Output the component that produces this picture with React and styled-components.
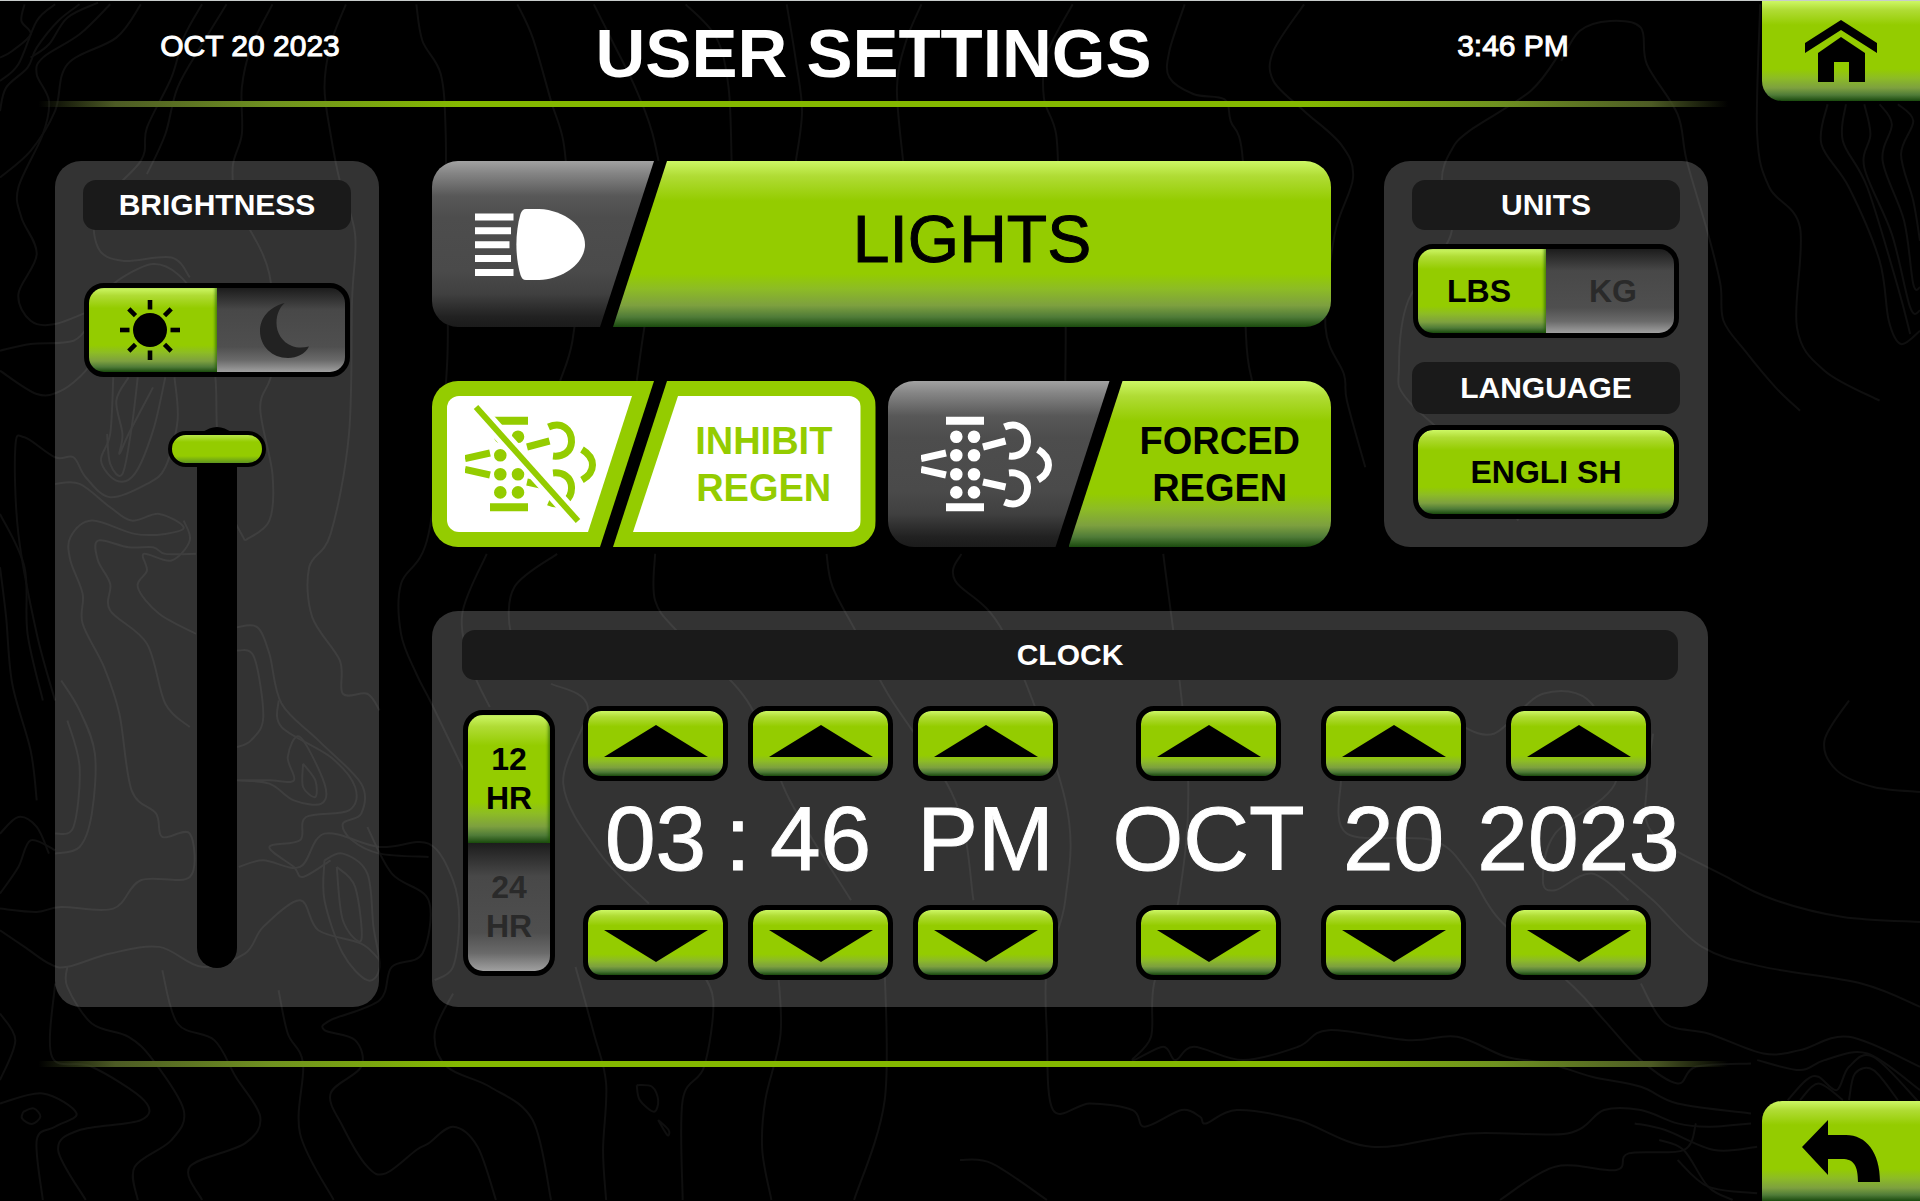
import { useState } from "react";
import styled, { createGlobalStyle, css } from "styled-components";

const green = "#94cc00";

const greenBevel = css`
    background: linear-gradient(
        #cdf765 0%,
        #b0dc35 9%,
        #94cc00 24%,
        #94cc00 68%,
        #8dbc25 77%,
        #7da03f 87%,
        #4f7b38 94%,
        #1a4a0e 100%
    );
`;

const greyBevel = css`
    background: linear-gradient(
        #a2a2a2 0%,
        #868686 7%,
        #585858 21%,
        #4d4d4d 34%,
        #4a4a4a 66%,
        #404040 80%,
        #212121 94%,
        #1b1b1b 100%
    );
`;

const sunkenBevel = css`
    background: linear-gradient(
        #1c1c1c 0%,
        #2a2a2a 8%,
        #484848 26%,
        #4f4f4f 70%,
        #6a6a6a 86%,
        #a0a0a0 100%
    );
`;

const GlobalStyle = createGlobalStyle`
    *, *::before, *::after {
        box-sizing: border-box;
    }
    body {
        margin: 0;
        background: #000;
        color: #fff;
        font-family: "Liberation Sans", Arial, Helvetica, sans-serif;
    }
    button {
        margin: 0;
        padding: 0;
        border: 0;
        font-family: inherit;
        cursor: pointer;
    }
`;

const Screen = styled.div`
    position: relative;
    display: flex;
    flex-direction: column;
    min-height: 100vh;
    min-width: 1760px;
    border-top: 1px solid #c8cccb;
    overflow: hidden;
    isolation: isolate;
`;

const Backdrop = styled.svg`
    position: absolute;
    inset: 0;
    width: 100%;
    height: 100%;
    z-index: -1;

    path {
        fill: none;
        stroke: #0f0f0f;
        stroke-width: 2;
        vector-effect: non-scaling-stroke;
    }
`;

const Header = styled.header`
    display: flex;
    height: 100px;
`;

const HeaderInfo = styled.div`
    flex: 1;
    display: grid;
    grid-template-columns: 390px 1fr 390px;
    padding: 0 54px 0 55px;
    text-align: center;
`;

const HeaderText = styled.div`
    padding-top: 28px;
    font-size: 30px;
    line-height: 34px;
    -webkit-text-stroke: 1px #fff;
`;

const Title = styled.h1`
    margin: 0;
    padding: 15px 16px 0 0;
    font-size: 69px;
    line-height: 76px;
    white-space: nowrap;
`;

const CornerButton = styled.button`
    display: flex;
    align-items: center;
    justify-content: center;
    width: 158px;
    height: 100px;
    border-radius: ${(props) => (props.$bottom ? "20px 0 0 0" : "0 0 0 20px")};
    ${greenBevel}
`;

const Divider = styled.hr`
    width: 100%;
    height: 6px;
    margin: 0;
    border: 0;
    background: linear-gradient(
        90deg,
        transparent 2%,
        #4c5a24 6%,
        #6f9120 14%,
        #84b800 24%,
        #84b800 68%,
        #6f9120 78%,
        #4c5a24 86%,
        transparent 90%
    );
`;

const Main = styled.main`
    display: grid;
    grid-template-columns: 324px 1fr 324px;
    grid-template-rows: 386px 396px;
    gap: 64px 53px;
    padding: 54px 212px 54px 55px;
`;

const Panel = styled.section`
    display: flex;
    flex-direction: column;
    align-items: center;
    padding: 19px 28px 0;
    border-radius: 26px;
    background: rgba(255, 255, 255, 0.2);
`;

const BrightnessPanel = styled(Panel)`
    grid-row: 1 / 3;
`;

const ClockPanel = styled(Panel)`
    grid-column: 2 / 4;
    padding: 19px 30px 0;
`;

const PanelTitle = styled.h2`
    width: 100%;
    margin: 0;
    border-radius: 13px;
    background: #1a1a1a;
    font-size: 30px;
    line-height: 50px;
    text-align: center;
`;

const ToggleOption = styled.label`
    flex: 1;
    display: flex;
    align-items: center;
    justify-content: center;
    font-size: 32px;
    line-height: 39px;
    font-weight: bold;
    text-align: center;
    cursor: pointer;
    color: #2a2a2a;
    ${sunkenBevel}

    &:has(input:checked) {
        color: #000;
        box-shadow: inset -3px 0 3px -1px rgba(30, 90, 0, 0.6);
        ${greenBevel}
    }

    input {
        appearance: none;
        width: 0;
        height: 0;
        margin: 0;
    }
`;

const Toggle = styled.div`
    display: flex;
    width: 266px;
    height: 94px;
    margin-top: ${(props) => props.$top}px;
    border: 5px solid #000;
    border-radius: 20px;
    background: #000;
    overflow: hidden;

    ${ToggleOption}:first-child {
        padding-right: 6px;
    }
    ${ToggleOption}:last-child {
        padding-left: 6px;
    }
`;

const HourFormat = styled.div`
    flex: none;
    display: flex;
    flex-direction: column;
    width: 92px;
    height: 266px;
    margin: 4px 28px 0 1px;
    border: 5px solid #000;
    border-radius: 20px;
    background: #000;
    overflow: hidden;
`;

const Slider = styled.input`
    appearance: none;
    writing-mode: vertical-lr;
    direction: rtl;
    width: 98px;
    height: 541px;
    margin: 50px 0 0;
    background: transparent;
    cursor: pointer;

    &::-webkit-slider-runnable-track {
        width: 40px;
        height: 541px;
        padding: 4px 0;
        border-radius: 20px;
        background: #000;
    }

    &::-webkit-slider-thumb {
        appearance: none;
        width: 98px;
        height: 36px;
        margin-left: -29px;
        border: 4px solid #000;
        border-radius: 18px;
        background: linear-gradient(#b8e64a, #94cc00 25%, #94cc00 75%, #5f9420);
    }
`;

const Actions = styled.div`
    display: flex;
    flex-direction: column;
    justify-content: space-between;
`;

const ActionRow = styled.div`
    display: flex;
    gap: 12px;
`;

const ActionButton = styled.button`
    flex: 1;
    display: flex;
    height: 166px;
    border-radius: 26px;
    background: #000;
    overflow: hidden;
    color: ${(props) => (props.$outlined ? green : "#000")};
`;

const ActionIcon = styled.span`
    flex: none;
    display: flex;
    align-items: center;
    width: 222px;
    padding-left: ${(props) => props.$indent}px;
    color: #fff;
    clip-path: polygon(0 0, 100% 0, 168px 100%, 0 100%);
    ${greyBevel}
`;

const ActionLabel = styled.span`
    flex: 1;
    display: flex;
    align-items: center;
    justify-content: center;
    margin-left: -41px;
    clip-path: polygon(54px 0, 100% 0, 100% 100%, 0 100%);
    font-size: ${(props) => (props.$large ? 66 : 38)}px;
    font-weight: ${(props) => (props.$large ? "normal" : "bold")};
    line-height: 47px;
    padding: ${(props) => (props.$large ? "0 0 10px" : "2px 0 0 40px")};
    ${(props) => props.$large && "-webkit-text-stroke: 1px #000;"}
    ${greenBevel}
`;

// Outlined buttons: solid green frame with a white face in each half
const FramedIcon = styled(ActionIcon)`
    padding: 15px 22px 15px 15px;
    color: ${green};
    background: ${green};
`;

const FramedLabel = styled(ActionLabel)`
    padding: 15px 15px 15px 20px;
    background: ${green};
`;

const IconFace = styled.span`
    flex: 1;
    display: flex;
    align-items: center;
    height: 100%;
    padding-left: 18px;
    border-radius: 12px 0 0 12px;
    background: #fff;
    clip-path: polygon(0 0, 100% 0, calc(100% - 44px) 100%, 0 100%);
`;

const LabelFace = styled.span`
    flex: 1;
    display: flex;
    align-items: center;
    justify-content: center;
    height: 100%;
    padding: 2px 0 0 34px;
    border-radius: 0 12px 12px 0;
    background: #fff;
    clip-path: polygon(45px 0, 100% 0, 100% 100%, 0 100%);
`;

const LanguageButton = styled.button`
    width: 266px;
    height: 94px;
    margin-top: 11px;
    && {
        border: 5px solid #000;
    }
    border-radius: 20px;
    color: #000;
    font-size: 32px;
    font-weight: bold;
    ${greenBevel}
    background-clip: padding-box;
`;

const LanguageTitle = styled(PanelTitle)`
    margin-top: 24px;
    line-height: 52px;
`;

const ClockBody = styled.div`
    display: flex;
    align-items: flex-start;
    width: 100%;
    padding: 26px 27px 0 0;
`;

const Fields = styled.div`
    flex: 1;
    display: flex;
    justify-content: space-between;
`;

const FieldGroup = styled.div`
    display: flex;
    gap: ${(props) => props.$gap}px;
`;

const Field = styled.div`
    display: flex;
    flex-direction: column;
    align-items: center;
    width: 145px;
`;

const StepButton = styled.button`
    display: flex;
    align-items: center;
    justify-content: center;
    width: 145px;
    height: 75px;
    && {
        border: 5px solid #000;
        padding: ${(props) => (props.$down ? "6px 0 0" : "0 0 6px")};
    }
    border-radius: 18px;
    ${greenBevel}
    background-clip: padding-box;
`;

const Value = styled.span`
    height: 124px;
    font-size: 91px;
    line-height: 116px;
    white-space: nowrap;
    -webkit-text-stroke: 1px #fff;
`;

// Sits inside the gap between hours and minutes
const Colon = styled(Value)`
    align-self: center;
    display: flex;
    justify-content: center;
    width: 20px;
    margin: 0 -20px;
`;

const Footer = styled.footer`
    flex: 1;
    display: flex;
    align-items: flex-end;
    justify-content: flex-end;
`;

// Topographic lines, as lists of x,y points
const contours = [
    "180,10 130,100 70,170 60,220 80,300 70,400 30,560 35,650 60,760 30,880 50,960 90,970 160,920",
    "40,10 35,60 50,100 20,150 0,170",
    "90,10 60,60 30,190 0,240",
    "130,10 95,60 60,140 45,200 10,260 0,330",
    "230,10 190,110 110,190 90,330 50,450 0,530",
    "160,5 110,50 80,130 50,170",
    "330,10 300,110 280,230 240,380 230,480 160,620 160,740 200,780 280,770 310,830",
    "370,10 330,130 290,260 270,400 240,520",
    "445,10 410,140 395,260 395,400 380,500 390,620 440,820 445,1100 425,1220 445,1420 440,1560 400,1620",
    "565,10 540,130 530,260 540,400 555,540 580,700 575,900 570,1300 540,1600 505,1700 510,1850 555,1980 560,2080 600,2080 620,2130",
    "680,10 690,120 720,220 728,400 728,700 730,1100 700,1600 655,1750 655,1900 680,2020 705,2110 760,2320",
    "845,10 870,110 900,300 920,420 930,600 945,800 935,1020 915,1140",
    "970,10 1000,120 1040,270 1070,430 1090,700 1060,900 1040,1140",
    "1120,10 1170,110 1190,260 1195,480",
    "1285,10 1300,180 1310,330 1300,480",
    "1505,10 1480,120 1465,260 1475,480",
    "1752,10 1710,160 1705,290 1725,400 1730,600 1740,900 1740,1140",
    "1935,10 1910,150 1910,230 1950,280 2000,295 2010,360 2030,480 2035,1000 2045,1140",
    "2130,10 2080,150 2080,240 2130,330 2190,430 2210,530 2180,700 2165,980 2195,1120 2200,1200 2230,1400",
    "2550,150 2500,270 2400,390 2370,450 2355,540 2370,700 2300,900 2285,1100 2300,1200 2420,1400 2480,1560",
    "2550,180 2580,90 2630,60 2680,80 2690,190 2740,340 2755,480 2790,700 2810,850 2815,960 2850,1050 2900,1160 2940,1230",
    "2875,10 2870,400 2890,560 2940,680 2935,980 2980,1110 3070,1200",
    "2985,310 2975,430 3020,560 3070,780 3085,960 3105,1030 3136,990",
    "3015,310 3010,420 3050,560 3100,860 3120,1000",
    "3045,310 3055,400 3045,500 3090,700 3120,920 3136,930",
    "3070,310 3090,370 3075,480 3110,660 3125,850 3136,860",
    "3100,310 3125,360 3105,460 3125,600 3136,720",
    "160,890 200,830 250,790 290,820 320,900 350,1100 355,1300 370,1500 400,1620",
    "0,1050 50,1030 120,1020 150,960",
    "0,1110 60,1180 100,1170 140,1110 150,1060",
    "210,1130 190,1200 200,1300 195,1360 210,1300 250,1160",
    "185,1130 180,1300 165,1380 190,1440 220,1420 250,1290 270,1130",
    "225,1130 215,1280 200,1420 180,1390 175,1300",
    "285,1130 290,1260 270,1400 240,1450 180,1490 140,1430 120,1370 90,1370 40,1310 25,1340 30,1600 60,1900 90,2100",
    "0,1540 40,1700 45,1900 70,2100",
    "0,1700 10,1850 20,2050 50,2250 60,2400",
    "90,1450 130,1450 180,1520 215,1560 260,1540 300,1580 270,1600 220,1600 150,1560 115,1610 115,1680 135,1780 135,1870 170,2000 195,2140 215,2370 255,2440 265,2510 310,2500 310,2630 230,2640 185,2725 100,2720 60,2735 0,2725",
    "320,1660 270,1660 250,1640 210,1640 160,1620 160,1680 180,1750 180,1830 240,1930 270,2110 310,2180",
    "300,1560 310,1620 280,1680 235,1660 240,1710 225,1760 260,1840 320,1900",
    "387,1880 420,1880 440,1960 460,2110 520,2220 590,2350 590,2440 560,2470 575,2520 620,2560 700,2570",
    "387,1950 415,1970 430,2150 410,2220 387,2240",
    "455,2100 460,2180 540,2270 580,2360 570,2430 500,2450 490,2520 440,2540 480,2600 495,2630 540,2580",
    "387,2340 440,2350 480,2400 525,2410 530,2350 490,2210 470,2270 480,2340 440,2340 387,2340",
    "495,2290 515,2340 515,2390 495,2360 495,2290",
    "530,2580 560,2560 600,2620 610,2780 620,2900 600,2940 560,2860 530,2700 530,2580",
    "550,2600 580,2660 590,2820 560,2760 550,2600",
    "390,2600 430,2580 490,2600 530,2500 620,2540 700,2530 740,2640 750,2760 740,2900 710,2940",
    "600,2480 640,2620 700,2700 690,2860 640,2900 620,3000 540,3060 530,3090 580,3120 590,3200 540,3280 560,3380 600,3500 630,3520 680,3450 700,3430 740,3380 780,3440 810,3600",
    "90,2560 130,2540 150,2440 155,2260 130,2130 100,2040",
    "90,2500 120,2480 130,2300 110,2160",
    "0,2500 30,2450 60,2480 80,2560",
    "0,2680 30,2600 50,2520 90,2550",
    "0,2790 40,2840 80,2890 110,2900 180,2860 260,2840 330,2900 400,2860 430,2780 490,2700 520,2790 590,2830 620,2880",
    "110,2900 110,2960 150,3070 210,3110 250,3180 300,3330 280,3420 220,3500 225,3600",
    "265,2910 290,3070 350,3120 385,3230 425,3350 400,3430 310,3500 330,3600",
    "455,2970 470,3100 495,3190 490,3400 545,3600",
    "90,2950 85,3170 150,3200 235,3300 230,3360 130,3390 95,3450 140,3600",
    "0,3310 70,3280 125,3340 90,3380 60,3420 70,3600",
    "38,3335 55,3325 66,3350 52,3372 36,3355 38,3335",
    "0,3040 25,3120 0,3240",
    "740,2980 710,3100 730,3200 800,3260 870,3360 900,3600",
    "940,2900 970,3100 990,3250 985,3450 990,3600",
    "1140,2900 1165,3000 1150,3200 1115,3300 1115,3600",
    "1270,2900 1275,3100 1250,3300 1245,3450 1260,3600",
    "1445,2900 1445,3300 1395,3600",
    "1040,3255 1065,3260 1075,3300 1068,3335 1045,3300 1040,3255",
    "1075,3360 1092,3390 1090,3405 1075,3360",
    "910,1660 840,1760 835,1900 870,1950",
    "795,1660 755,1840 770,2000 800,2120",
    "1070,1660 1070,1800 1110,1900 1220,2100 1290,2400 1390,2700",
    "1350,1660 1360,1760 1400,1900 1450,2080 1560,2400 1590,2700",
    "900,2050 960,2120 920,2350 980,2560 1060,2710",
    "1570,1660 1560,1740 1640,1900 1740,2400 1740,2700 1710,2900 1710,3100 1720,3330 1780,3310 1850,3330 1870,3380 1930,3330 1960,3350 1970,3370 2020,3330 2120,3360 2240,3440 2400,3400 2560,3400 2620,3330 2680,3330 2740,3370 2790,3380 2860,3370",
    "1900,1660 1940,2300 1925,2700 1885,2950 1880,3110 1850,3180 1900,3140 1920,3180 1950,3140 2030,3180 2120,3140 2170,3090 2300,3120 2380,3110 2460,3170 2530,3190 2600,3230 2680,3260 2740,3310 2860,3340",
    "2190,2340 2200,2500 2340,2520 2400,2620 2450,2760 2570,2960 2620,3060 2680,3180 2740,3250 2770,3200 2860,3190",
    "2380,2170 2440,2200 2520,2080 2600,2110 2640,2340 2540,2500 2520,2640 2540,2670 2600,2620 2660,2700",
    "2700,2200 2690,2350 2700,2500 2820,2630 2900,2700 3010,2750 3136,2765",
    "2630,2590 2700,2700 2780,2840 2880,2900 3040,2950 3136,3020",
    "3020,2100 2980,2220 3000,2310 3060,2360 3136,2375",
    "2680,2950 2720,3070 2790,3100 2880,3160 2940,3150 3020,3110 3136,3200",
    "2870,3180 2940,3210 2980,3180 3050,3160 3136,3270",
    "2920,3300 2950,3240 2970,3230 3000,3270 3020,3200 3060,3170 3136,3310",
    "2940,3300 2970,3250 3010,3300",
    "3020,3300 3030,3220 3060,3210 3100,3300",
    "2670,3370 2720,3390 2800,3450 2870,3440",
    "2450,3600 2540,3500 2640,3510 2660,3460 2750,3450 2770,3370",
    "2710,3420 2750,3450 2790,3560 2830,3600",
    "2740,3480 2790,3560 2870,3580",
    "1568,3480 1620,3490 1710,3600",
];

// Smooth a point list into a cubic path
function toPath(line) {
    const pts = line.split(" ").map((p) => p.split(",").map(Number));
    let d = `M${pts[0]}`;
    for (let i = 0; i < pts.length - 1; i++) {
        const [p0, p1, p2, p3] = [pts[i - 1] || pts[i], pts[i], pts[i + 1], pts[i + 2] || pts[i + 1]];
        d += `C${p1.map((v, k) => v + (p2[k] - p0[k]) / 6)} ${p2.map((v, k) => v - (p3[k] - p1[k]) / 6)} ${p2}`;
    }
    return d;
}

function HomeIcon() {
    return (
        <svg width="72" height="62" viewBox="0 0 72 62" aria-hidden="true">
            <path d="M36 0 L72 23 V33 L36 10 L0 33 V23 Z" />
            <path d="M36 17 L60 33 V62 H44 V42 H29 V62 H13 V33 Z" />
        </svg>
    );
}

function BackIcon() {
    return (
        <svg width="78" height="62" viewBox="0 0 78 62" aria-hidden="true">
            <path d="M0 27 L26 0 V15 H44 C64 15 78 32 78 62 H56 C56 46 52 39 40 39 H26 V55 Z" />
        </svg>
    );
}

function SunIcon() {
    return (
        <svg width="60" height="60" viewBox="-30 -30 60 60" aria-hidden="true">
            <circle r="17" />
            {[0, 45, 90, 135, 180, 225, 270, 315].map((angle) => (
                <rect key={angle} x="-2.3" y="-30" width="4.6" height="9.5" transform={`rotate(${angle})`} />
            ))}
        </svg>
    );
}

function MoonIcon() {
    return (
        <svg width="49" height="55" viewBox="0 0 49 55" fill="#222" aria-hidden="true">
            <path d="M24.7 0 C9 4 0 15 0 28 C0 43 12 55 28 55 C37 55 45 51 49 43.5 C43 45 37 45 32 43 C22 39 16.5 30 16.5 20 C16.5 12 19 5 24.7 0 Z" />
        </svg>
    );
}

function HeadlightIcon() {
    return (
        <svg width="110" height="71" viewBox="0 0 110 71" fill="currentColor" aria-hidden="true">
            <path d="M0 4.5H38.5V11.5H0Z M0 18.3H36V25.3H0Z M0 32.2H34.5V39.2H0Z M0 46H36V53H0Z M0 60H38.5V67H0Z" />
            <path d="M51 0 H64 C90 1 110 18 110 35.5 C110 53 90 70 64 71 H51 C48 71 46.5 69 45.5 66 C40 47 40 24 45.5 5 C46.5 2 48 0 51 0 Z" />
        </svg>
    );
}

function RegenIcon({ crossed }) {
    return (
        <svg width="134" height="118" viewBox="0 0 134 118" fill="none" stroke="currentColor" strokeWidth="7" aria-hidden="true">
            <path d="M25 15.7H63 M25 102.3H63" strokeWidth="8" />
            <path d="M0 53.5L25 48 M0 64.5L25 70 M62 42L84.5 36 M62 77L84.5 82" />
            <path d="M83.5 22 C97 16 107 25 106.5 37 C106 47 98 52 88 51" />
            <path d="M83.5 97 C97 103 107 94 106.5 82 C106 72 98 67 88 68" />
            <path d="M117 44.5 C131 53 131 67 117 75" />
            <g fill="currentColor" stroke="none">
                {[31.7, 50.3, 69.2, 87.4].map((y) => (
                    <path key={y} d={`M29 ${y}a6.3 6.3 0 1 0 12.6 0a6.3 6.3 0 1 0 -12.6 0 M46.7 ${y}a6.3 6.3 0 1 0 12.6 0a6.3 6.3 0 1 0 -12.6 0`} />
                ))}
            </g>
            {crossed && (
                <>
                    <path d="M11 2L113 116" stroke="#fff" strokeWidth="15" />
                    <path d="M11 2L113 116" strokeWidth="6" />
                </>
            )}
        </svg>
    );
}

function Arrow({ down }) {
    return (
        <svg width="104" height="32" viewBox="0 0 104 32" aria-hidden="true">
            <path d={down ? "M0 0H104L52 32Z" : "M0 32H104L52 0Z"} />
        </svg>
    );
}

function Stepper({ name, value }) {
    return (
        <Field>
            <StepButton aria-label={`${name} up`}>
                <Arrow />
            </StepButton>
            <Value>{value}</Value>
            <StepButton $down aria-label={`${name} down`}>
                <Arrow down />
            </StepButton>
        </Field>
    );
}

function Option({ name, value, current, onChange, label, children }) {
    return (
        <ToggleOption>
            <input
                type="radio"
                name={name}
                value={value}
                aria-label={label}
                checked={current === value}
                onChange={() => onChange(value)}
            />
            {children}
        </ToggleOption>
    );
}

function App() {
    const [mode, setMode] = useState("day");
    const [units, setUnits] = useState("lbs");
    const [hours, setHours] = useState("12");
    const [brightness, setBrightness] = useState(100);

    return (
        <Screen>
            <GlobalStyle />
            <Backdrop viewBox="0 0 3136 3603" preserveAspectRatio="none" aria-hidden="true">
                {contours.map((line) => (
                    <path key={line} d={toPath(line)} />
                ))}
            </Backdrop>

            <Header>
                <HeaderInfo>
                    <HeaderText>OCT 20 2023</HeaderText>
                    <Title>USER SETTINGS</Title>
                    <HeaderText>3:46 PM</HeaderText>
                </HeaderInfo>
                <CornerButton aria-label="Home">
                    <HomeIcon />
                </CornerButton>
            </Header>
            <Divider />

            <Main>
                <BrightnessPanel>
                    <PanelTitle>BRIGHTNESS</PanelTitle>
                    <Toggle $top={53}>
                        <Option name="mode" value="day" label="Day" current={mode} onChange={setMode}>
                            <SunIcon />
                        </Option>
                        <Option name="mode" value="night" label="Night" current={mode} onChange={setMode}>
                            <MoonIcon />
                        </Option>
                    </Toggle>
                    <Slider
                        type="range"
                        aria-label="Brightness"
                        value={brightness}
                        onChange={(e) => setBrightness(Number(e.target.value))}
                    />
                </BrightnessPanel>

                <Actions>
                    <ActionRow>
                        <ActionButton>
                            <ActionIcon $indent={43}>
                                <HeadlightIcon />
                            </ActionIcon>
                            <ActionLabel $large>LIGHTS</ActionLabel>
                        </ActionButton>
                    </ActionRow>
                    <ActionRow>
                        <ActionButton $outlined>
                            <FramedIcon>
                                <IconFace>
                                    <RegenIcon crossed />
                                </IconFace>
                            </FramedIcon>
                            <FramedLabel>
                                <LabelFace>
                                    INHIBIT
                                    <br />
                                    REGEN
                                </LabelFace>
                            </FramedLabel>
                        </ActionButton>
                        <ActionButton>
                            <ActionIcon $indent={33}>
                                <RegenIcon />
                            </ActionIcon>
                            <ActionLabel>
                                FORCED
                                <br />
                                REGEN
                            </ActionLabel>
                        </ActionButton>
                    </ActionRow>
                </Actions>

                <Panel>
                    <PanelTitle>UNITS</PanelTitle>
                    <Toggle $top={14}>
                        <Option name="units" value="lbs" current={units} onChange={setUnits}>
                            LBS
                        </Option>
                        <Option name="units" value="kg" current={units} onChange={setUnits}>
                            KG
                        </Option>
                    </Toggle>
                    <LanguageTitle>LANGUAGE</LanguageTitle>
                    <LanguageButton>ENGLI SH</LanguageButton>
                </Panel>

                <ClockPanel>
                    <PanelTitle>CLOCK</PanelTitle>
                    <ClockBody>
                        <HourFormat>
                            <Option name="hours" value="12" current={hours} onChange={setHours}>
                                12
                                <br />
                                HR
                            </Option>
                            <Option name="hours" value="24" current={hours} onChange={setHours}>
                                24
                                <br />
                                HR
                            </Option>
                        </HourFormat>
                        <Fields>
                            <FieldGroup $gap={20}>
                                <Stepper name="Hour" value="03" />
                                <Colon>:</Colon>
                                <Stepper name="Minute" value="46" />
                                <Stepper name="Period" value="PM" />
                            </FieldGroup>
                            <FieldGroup $gap={40}>
                                <Stepper name="Month" value="OCT" />
                                <Stepper name="Day" value="20" />
                                <Stepper name="Year" value="2023" />
                            </FieldGroup>
                        </Fields>
                    </ClockBody>
                </ClockPanel>
            </Main>

            <Divider />
            <Footer>
                <CornerButton $bottom aria-label="Back">
                    <BackIcon />
                </CornerButton>
            </Footer>
        </Screen>
    );
}

export default App;
